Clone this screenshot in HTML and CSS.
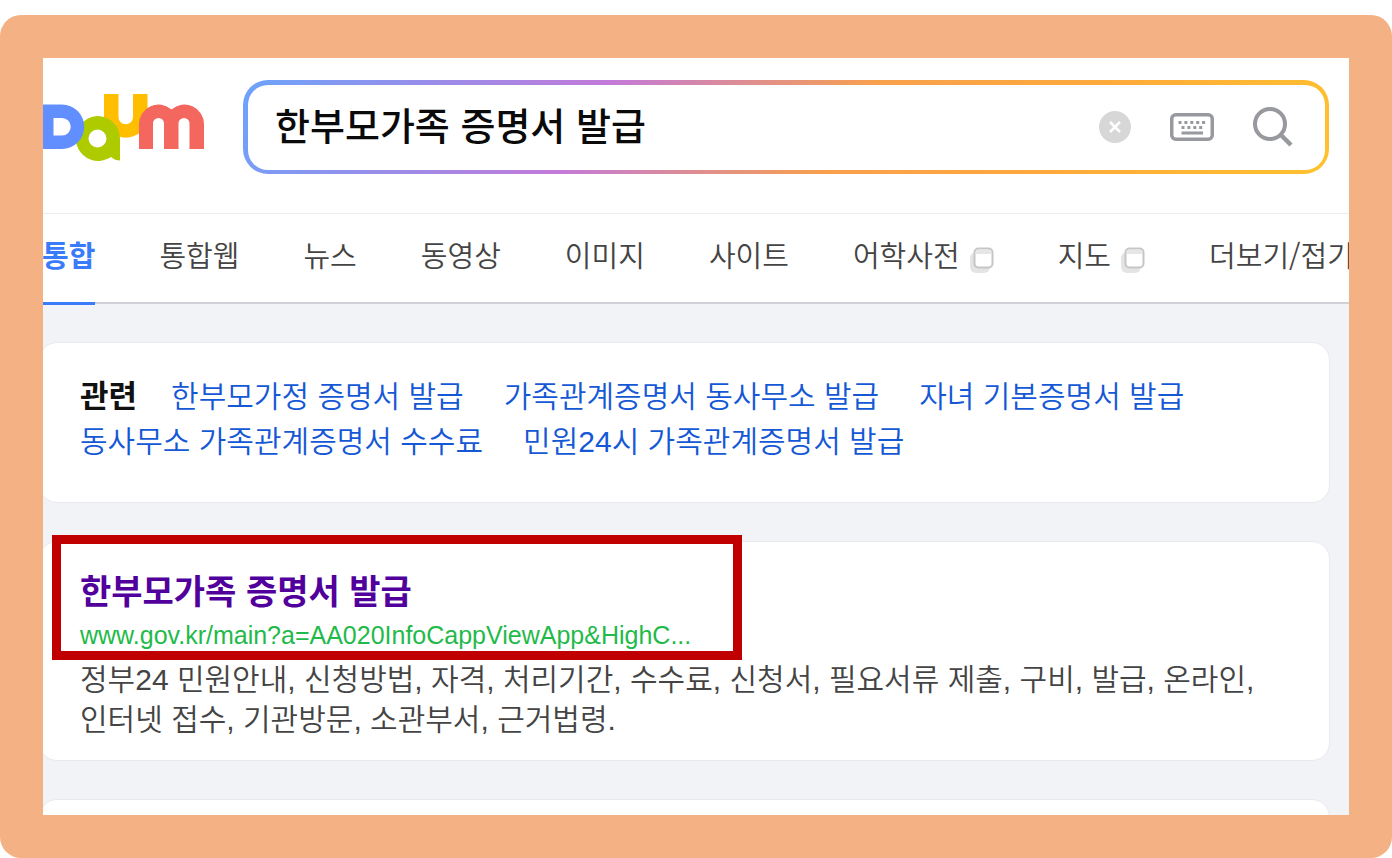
FILE: index.html
```html
<!DOCTYPE html>
<html lang="ko">
<head>
<meta charset="utf-8">
<title>한부모가족 증명서 발급 – Daum 검색</title>
<link rel="stylesheet" href="styles.css">
</head>
<body>
<div class="frame">
  <div class="page">
    <header class="header">
      <a class="logo" href="#" aria-label="Daum">
        <svg width="161" height="68" viewBox="0 0 161 68" aria-hidden="true">
          <path fill="#ffbe00" d="M61 0h14.500v23a7.250 7.250 0 0 0 14.500 0V0h14.500v22a21.750 21.750 0 0 1-43.500 0z"/>
          <path fill="#aecb00" fill-rule="evenodd" d="M54.500 22a22.500 22.500 0 1 0 13.500 41q4 3.500 9 3.500V44.500A22.500 22.500 0 0 0 54.500 22zm0 13.500a9 9 0 1 1 0 18 9 9 0 0 1 0-18z"/>
          <path fill="#628fff" fill-rule="evenodd" d="M0 10.500h19a22.200 22.200 0 0 1 0 44.500H0zM10.500 24v17.500H19a8.750 8.750 0 0 0 0-17.500z"/>
          <path fill="#f3675e" d="M96 55V30a19.500 19.500 0 0 1 32.500-14.500A19.500 19.500 0 0 1 161 30v25h-14.500V29.500a5.500 5.500 0 0 0-11 0V55H121V29.500a5.500 5.500 0 0 0-11 0V55z"/>
        </svg>
      </a>
      <form class="search">
        <div class="search-inner">
          <input class="search-input" type="text" value="한부모가족 증명서 발급" aria-label="검색어">
          <button class="icon-button" type="button" aria-label="지우기">
            <svg width="32" height="32" viewBox="0 0 32 32"><circle cx="16" cy="16" r="16" fill="#d7d7d7"/><path d="M11 11l10 10M21 11L11 21" stroke="#fff" stroke-width="2.500"/></svg>
          </button>
          <button class="icon-button" type="button" aria-label="키보드">
            <svg width="44" height="28" viewBox="0 0 44 28"><rect x="1.750" y="1.750" width="40.500" height="24.500" rx="4" fill="none" stroke="#97999f" stroke-width="3.500"/><path d="M8.500 9.500h27" stroke="#97999f" stroke-width="3" stroke-dasharray="3 2.900"/><path d="M11.500 14.500h21" stroke="#97999f" stroke-width="3" stroke-dasharray="3 2.900"/><path d="M11.500 20h21.500" stroke="#97999f" stroke-width="3"/></svg>
          </button>
          <button class="icon-button" type="submit" aria-label="검색">
            <svg width="40" height="40" viewBox="0 0 40 40" fill="none" stroke="#97999f"><circle cx="17" cy="17" r="15" stroke-width="4"/><path d="M28 28l10 10" stroke-width="4.500"/></svg>
          </button>
        </div>
      </form>
    </header>
    <nav class="tabs">
      <a class="tab tab-active" href="#">통합</a>
      <a class="tab" href="#">통합웹</a>
      <a class="tab" href="#">뉴스</a>
      <a class="tab" href="#">동영상</a>
      <a class="tab" href="#">이미지</a>
      <a class="tab" href="#">사이트</a>
      <a class="tab" href="#">어학사전<svg class="window-icon" width="24" height="27" viewBox="0 0 24 27"><rect x="0" y="5" width="20" height="21" rx="6" fill="#e4e4e4"/><rect x="4.500" y="1.500" width="18" height="19" rx="4" fill="#fff" stroke="#c6c6c6" stroke-width="2"/><path d="M6 7V5q0-2 2-2h11q2 0 2 2v2z" fill="#e6e6e6"/></svg></a>
      <a class="tab" href="#">지도<svg class="window-icon" width="24" height="27" viewBox="0 0 24 27"><rect x="0" y="5" width="20" height="21" rx="6" fill="#e4e4e4"/><rect x="4.500" y="1.500" width="18" height="19" rx="4" fill="#fff" stroke="#c6c6c6" stroke-width="2"/><path d="M6 7V5q0-2 2-2h11q2 0 2 2v2z" fill="#e6e6e6"/></svg></a>
      <a class="tab" href="#">더보기/접기</a>
    </nav>
    <main class="results">
      <section class="card related">
        <h2 class="related-title">관련</h2>
        <a class="related-link" href="#">한부모가정 증명서 발급</a>
        <a class="related-link" href="#">가족관계증명서 동사무소 발급</a>
        <a class="related-link" href="#">자녀 기본증명서 발급</a>
        <a class="related-link" href="#">동사무소 가족관계증명서 수수료</a>
        <a class="related-link" href="#">민원24시 가족관계증명서 발급</a>
      </section>
      <article class="card result">
        <h3 class="result-title"><a href="#">한부모가족 증명서 발급</a></h3>
        <a class="result-url" href="#">www.gov.kr/main?a=AA020InfoCappViewApp&amp;HighC...</a>
        <p class="result-text">정부24 민원안내, 신청방법, 자격, 처리기간, 수수료, 신청서, 필요서류 제출, 구비, 발급, 온라인, 인터넷 접수, 기관방문, 소관부서, 근거법령.</p>
        <div class="highlight"></div>
      </article>
      <section class="card card-next"></section>
    </main>
  </div>
</div>
</body>
</html>
```
FILE: styles.css
```css
* {
  box-sizing: border-box;
}

body {
  margin: 0;
  padding-top: 15px;
  height: 100vh;
  background: #fff;
  font-family: "Noto Sans CJK KR", sans-serif;
  color: #444;
}

a {
  color: inherit;
  text-decoration: none;
}

.frame {
  height: 100%;
  padding: 43px;
  border-radius: 21px;
  background: #f4b183;
}

.page {
  height: 100%;
  overflow: hidden;
  background: #f2f3f7;
}

.header {
  display: flex;
  align-items: center;
  gap: 39px;
  padding: 22px 20px 39px 0;
  background: #fff;
  border-bottom: 1px solid #ececee;
}

.logo svg {
  display: block;
  margin-top: 2px;
}

.search {
  flex: 1;
  min-width: 0;
  padding: 5px 4px 4px 5px;
  border-radius: 25px;
  background: linear-gradient(120deg, #6ca3fa, #c27ada 32%, #f9a04c 56%, #fda93c 75%, #fec22e);
}

.search-inner {
  display: flex;
  align-items: center;
  gap: 39px;
  height: 85px;
  padding: 0 32px 1px 27px;
  border-radius: 20px;
  background: #fff;
}

.search-input {
  flex: 1;
  min-width: 0;
  padding: 0 0 6px;
  border: 0;
  outline: 0;
  background: none;
  font: 500 38px/56px "Noto Sans CJK KR", sans-serif;
  color: #0a0a0a;
}

.icon-button {
  padding: 0;
  border: 0;
  background: none;
}

.icon-button svg {
  display: block;
}

.tabs {
  display: flex;
  gap: 64px;
  height: 90px;
  background: #fff;
  border-bottom: 2px solid #d0d1d6;
  font-size: 29px;
  font-weight: 350;
  line-height: 78px;
  white-space: nowrap;
}

.tab {
  display: flex;
  flex: none;
  align-items: center;
  gap: 10px;
  height: 91px;
  padding-bottom: 12px;
}

.tab-active {
  margin-left: -1px;
  border-bottom: 3px solid #3a7bfa;
  padding-bottom: 9px;
  font-weight: 700;
  color: #3a7bfa;
}

.window-icon {
  margin-top: 14px;
}

.results {
  display: grid;
  gap: 38px;
  padding: 38px 19px 0 0;
}

.card {
  margin-left: -4px;
  padding: 32px 40px;
  border: 1px solid #e9eaee;
  border-radius: 18px;
  background: #fff;
}

.related {
  display: flex;
  flex-wrap: wrap;
  column-gap: 40px;
  padding-top: 31px;
  padding-bottom: 38px;
  font-family: "Liberation Sans", "Noto Sans CJK KR", sans-serif;
  font-size: 30px;
  font-weight: 350;
  line-height: 45px;
}

.related-title {
  margin: 0 -6px 0 0;
  font-size: 31px;
  font-weight: 700;
  color: #111;
}

.related-link {
  color: #1558d6;
}

.result {
  position: relative;
  padding: 24px 40px 20px;
}

.result-title {
  margin: 0;
  font-size: 34px;
  font-weight: 700;
  line-height: 48px;
  color: #52009c;
}

.result-url {
  display: block;
  font: 25px/42px "Liberation Sans", sans-serif;
  color: #1fba4a;
}

.result-text {
  margin: 4px 0 0;
  font-family: "Liberation Sans", "Noto Sans CJK KR", sans-serif;
  font-size: 30px;
  font-weight: 350;
  line-height: 40px;
}

.highlight {
  position: absolute;
  top: -7px;
  left: 12px;
  width: 690px;
  height: 125px;
  border: 9px solid #c00000;
  pointer-events: none;
}

.card-next {
  min-height: 200px;
}
```
